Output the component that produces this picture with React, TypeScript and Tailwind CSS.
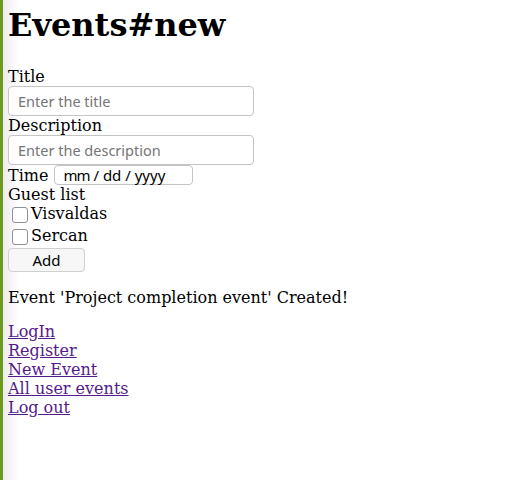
import React from "react";

const serif = { fontFamily: '"DejaVu Serif", serif' };
const sans = { fontFamily: '"Noto Sans", sans-serif' };

function Check({ label }: { label: string }) {
  return (
    <label className="flex h-[22px] items-start">
      <span className="ml-[4px] mr-[3px] mt-[3px] box-border block h-[16px] w-[16px] rounded-[3px] border border-[#8f8f9d] bg-white" />
      <span className="leading-[19px]">{label}</span>
    </label>
  );
}

export default function App() {
  const links = ["LogIn", "Register", "New Event", "All user events", "Log out"];
  return (
    <div
      className="min-h-[480px] w-full border-l-[3px] border-[#6b9a1f] bg-[linear-gradient(to_right,#ececec_0px,#ffffff_16px)] text-[16px] text-black"
      style={serif}
    >
      <div className="px-[5px] pt-[7px]">
        <h1 className="m-0 text-[32px] font-bold leading-[37px]">Events#new</h1>
        <form className="mt-[23px] flex flex-col" onSubmit={(e) => e.preventDefault()}>
          <label className="leading-[19px]">Title</label>
          <input
            type="text"
            placeholder="Enter the title"
            className="box-border h-[30px] w-[246px] rounded-[4px] border border-[#c4c4c4] bg-white px-[9px] text-[14.5px] placeholder:text-[#757575]"
            style={sans}
          />
          <label className="leading-[19px]">Description</label>
          <input
            type="text"
            placeholder="Enter the description"
            className="box-border h-[30px] w-[246px] rounded-[4px] border border-[#c4c4c4] bg-white px-[9px] text-[14.5px] placeholder:text-[#757575]"
            style={sans}
          />
          <div className="flex h-[20px] items-center">
            <span className="leading-[19px]">Time</span>
            <span
              className="ml-[6px] box-border flex h-[20px] w-[139px] items-center rounded-[4px] border border-[#c4c4c4] bg-white pl-[8px] text-[15px] leading-none text-black"
              style={sans}
            >
              <span className="tracking-[-1px]">mm</span>
              <span>&nbsp;/ dd / yyyy</span>
            </span>
          </div>
          <div className="leading-[19px]">Guest list</div>
          <Check label="Visvaldas" />
          <Check label="Sercan" />
          <button
            type="submit"
            className="box-border h-[24px] w-[77px] rounded-[4px] border border-[#d0d0d0] bg-[#f7f7f7] text-[15px] leading-none text-black"
            style={sans}
          >
            Add
          </button>
        </form>
        <p className="mt-[16px] leading-[19px]">Event 'Project completion event' Created!</p>
        <nav className="mt-[15px] flex flex-col items-start">
          {links.map((l) => (
            <a key={l} href="#" className="leading-[19px] text-[#551a8b] underline">
              {l}
            </a>
          ))}
        </nav>
      </div>
    </div>
  );
}
